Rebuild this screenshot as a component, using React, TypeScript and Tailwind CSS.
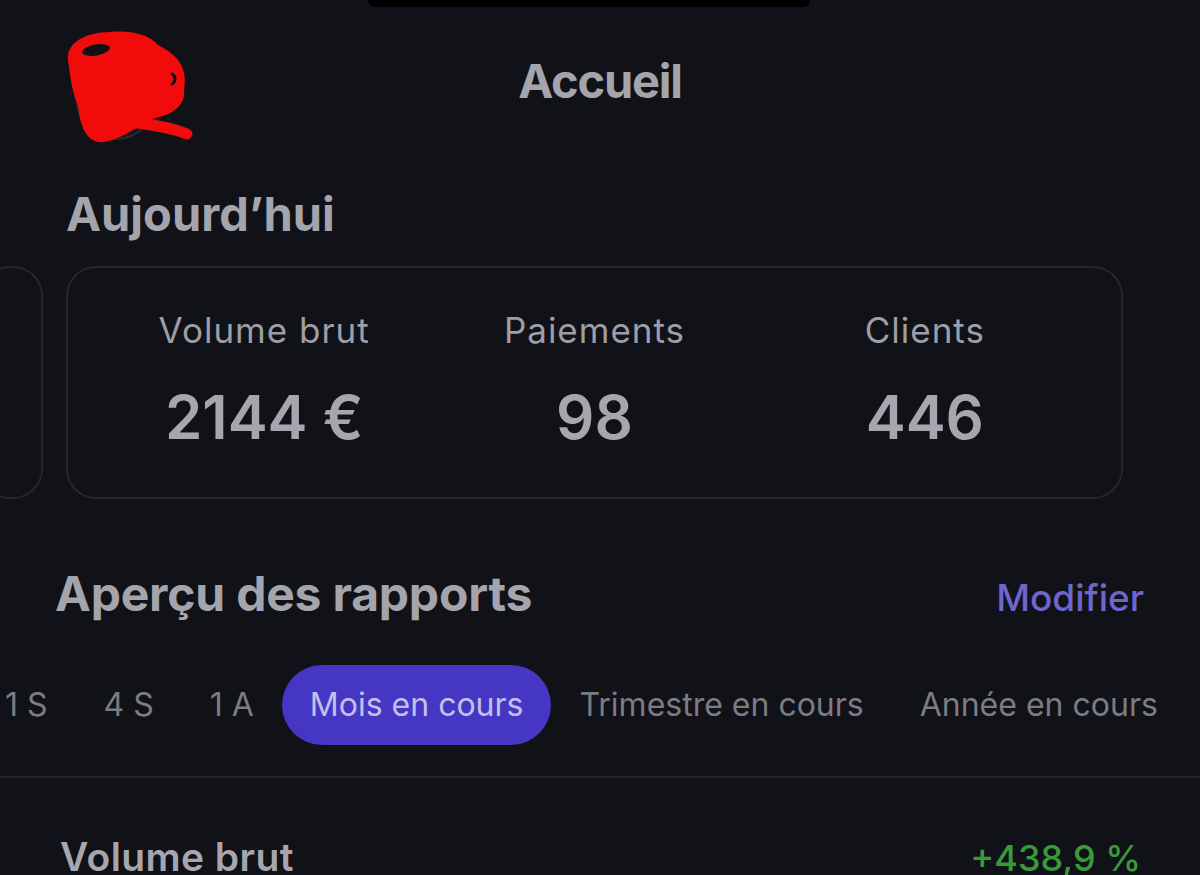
import React from "react";

function Scribble() {
  return (
    <svg
      className="absolute left-0 top-0"
      width="200"
      height="150"
      viewBox="0 0 200 150"
      fill="none"
    >
      <circle cx="116" cy="100" r="39" stroke="#2a2b31" strokeWidth="2" fill="#15161b" />
      <path
        d="M68,60 C66,44 84,32 110,32 C135,30 150,36 158,45 C178,55 188,68 184,90 C186,105 172,115 155,118 C140,125 115,144 98,142 C84,139 80,122 78,106 C72,92 70,75 68,60 Z"
        fill="#f20b0b"
      />
      <ellipse cx="96" cy="50" rx="14" ry="5.5" transform="rotate(-10 96 50)" fill="#111217" />
      <path d="M172,74 C176,76 176,82 172,84" stroke="#111217" strokeWidth="3" strokeLinecap="round" />
      <path
        d="M122,121 C148,124 170,127 187,134"
        stroke="#f20b0b"
        strokeWidth="11"
        strokeLinecap="round"
      />
    </svg>
  );
}

const tabs = ["1 S", "4 S", "1 A", "Mois en cours", "Trimestre en cours", "Année en cours"];

export default function App() {
  return (
    <div className="relative h-[875px] w-[1200px] overflow-hidden bg-[#111217] font-['Inter',sans-serif] text-[#a3a4ac]">
      {/* notch */}
      <div className="flex pl-[368px]">
        <div className="h-[7px] w-[442px] rounded-b-[26px] bg-black" />
      </div>

      {/* header */}
      <div className="mt-[50px] flex h-[48px] items-center justify-center">
        <div className="text-[47px] font-bold leading-[48px] tracking-[-1.2px]">Accueil</div>
      </div>

      {/* Aujourd'hui */}
      <div className="mt-[85px] pl-[66px] text-[47px] font-bold leading-[48px] tracking-[0px]">
        Aujourd’hui
      </div>

      <div className="mt-[28px] flex gap-[23px]">
        <div className="-ml-[20px] h-[233px] w-[63px] shrink-0 rounded-[30px] border-2 border-[#25262c]" />
        <div className="grid h-[233px] w-[1057px] shrink-0 grid-cols-3 rounded-[30px] border-2 border-[#25262c] px-[31px] pt-[45px]">
          {[
            ["Volume brut", "2144 €"],
            ["Paiements", "98"],
            ["Clients", "446"],
          ].map(([label, value]) => (
            <div key={label} className="flex flex-col items-center">
              <div className="text-[35px] leading-[35px] tracking-[1px] text-[#9d9ea6]">{label}</div>
              <div className="mt-[39px] text-[60px] font-semibold leading-[60px] text-[#a5a6ae]">
                {value}
              </div>
            </div>
          ))}
        </div>
      </div>

      {/* Aperçu */}
      <div className="mt-[71px] flex items-baseline justify-between pl-[55px] pr-[56px]">
        <div className="text-[48px] font-bold leading-[48px] tracking-[-0.2px]">Aperçu des rapports</div>
        <div className="text-[37px] font-medium leading-[40px] text-[#6e66cf]">Modifier</div>
      </div>

      {/* tabs */}
      <div className="mt-[47px] -ml-[23px] flex items-center whitespace-nowrap">
        {tabs.map((t) => {
          const active = t === "Mois en cours";
          return (
            <div
              key={t}
              className={
                active
                  ? "flex h-[80px] shrink-0 items-center rounded-full bg-[#4536c4] px-[28px] text-[32px] text-[#c3c0ea]"
                  : "flex h-[80px] shrink-0 items-center px-[28px] text-[32px] text-[#7b7c84]"
              }
            >
              {t}
            </div>
          );
        })}
      </div>

      <div className="mt-[31px] h-[2px] bg-[#24252b]" />

      <div className="mt-[59px] flex items-baseline justify-between pl-[60px] pr-[59px]">
        <div className="text-[39px] font-semibold leading-[39px] tracking-[0.4px] text-[#a5a6ae]">Volume brut</div>
        <div className="text-[36px] font-medium leading-[39px] text-[#3a9a3b]">+438,9 %</div>
      </div>

      <Scribble />
    </div>
  );
}
